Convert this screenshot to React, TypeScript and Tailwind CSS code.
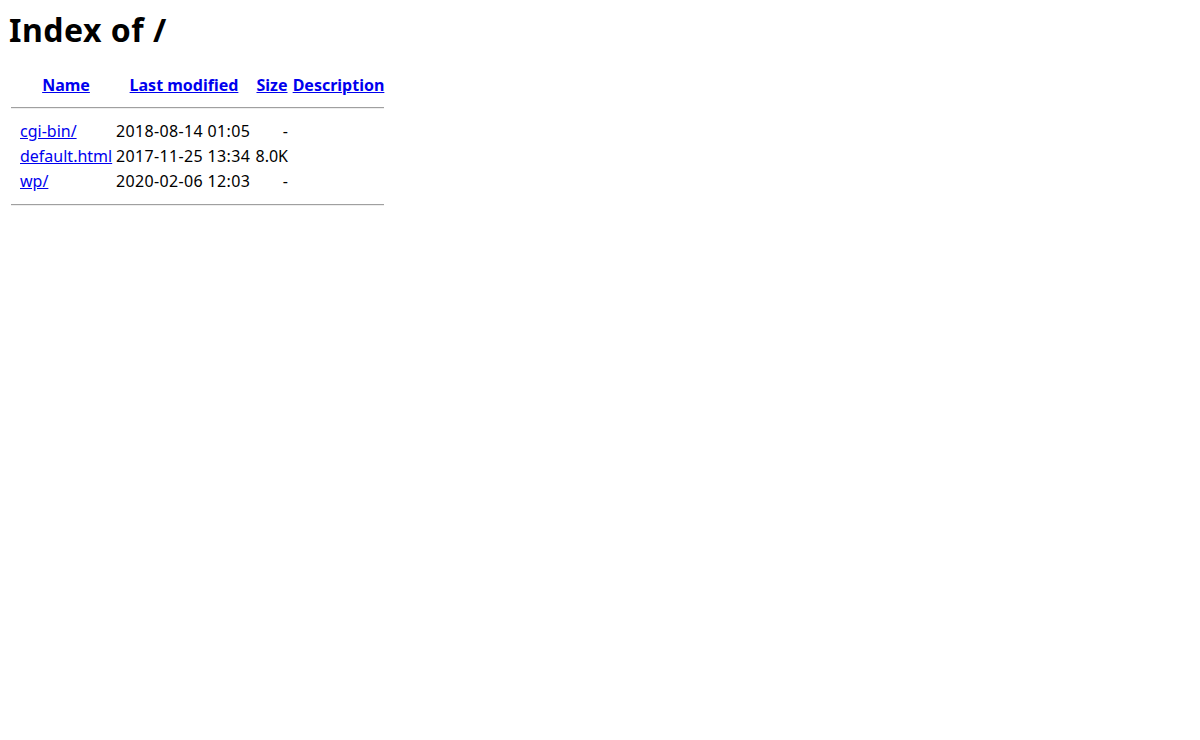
import React from "react";

const rows = [
  { name: "cgi-bin/", date: "2018-08-14 01:05", size: "-" },
  { name: "default.html", date: "2017-11-25 13:34", size: "8.0K" },
  { name: "wp/", date: "2020-02-06 12:03", size: "-" },
];

const cols = "grid grid-cols-[7px_94px_138px_34px_95px] gap-x-[2px]";

export default function App() {
  return (
    <div
      className="min-h-[740px] bg-white text-black pl-[8px] pt-[9px]"
      style={{ fontFamily: '"Noto Sans", "Noto Sans CJK SC", sans-serif' }}
    >
      <h1 className="text-[32px] leading-[42px] font-bold tracking-[0.5px] pl-[1px]">Index of /</h1>
      <div className="pl-[2px] pt-[23px] text-[16px] leading-[21px]">
        <div className={cols + " py-[1px] font-bold"}>
          <div />
          <div className="text-center">
            <a href="#" className="text-[#0000ee] underline">Name</a>
          </div>
          <div className="text-center whitespace-nowrap">
            <a href="#" className="text-[#0000ee] underline">Last modified</a>
          </div>
          <div className="text-center">
            <a href="#" className="text-[#0000ee] underline">Size</a>
          </div>
          <div className="text-center">
            <a href="#" className="text-[#0000ee] underline">Description</a>
          </div>
        </div>
        <div className="pt-[10px] pb-[12px] pl-[1px] w-[374px]">
          <div className="h-[2px] border-t border-[#a0a0a0] border-b border-b-[#eeeeee]" />
        </div>
        <div className="flex flex-col gap-y-[4px]">
          {rows.map((r) => (
            <div key={r.name} className={cols + " whitespace-nowrap"}>
              <div />
              <div className="pl-[1px]">
                <a href="#" className="text-[#0000ee] underline">{r.name}</a>
              </div>
              <div className="pl-[1px] tracking-[0.35px]">{r.date}</div>
              <div className="text-right pr-[1px]">{r.size}</div>
              <div />
            </div>
          ))}
        </div>
        <div className="pt-[12px] pl-[1px] w-[374px]">
          <div className="h-[2px] border-t border-[#a0a0a0] border-b border-b-[#eeeeee]" />
        </div>
      </div>
    </div>
  );
}
